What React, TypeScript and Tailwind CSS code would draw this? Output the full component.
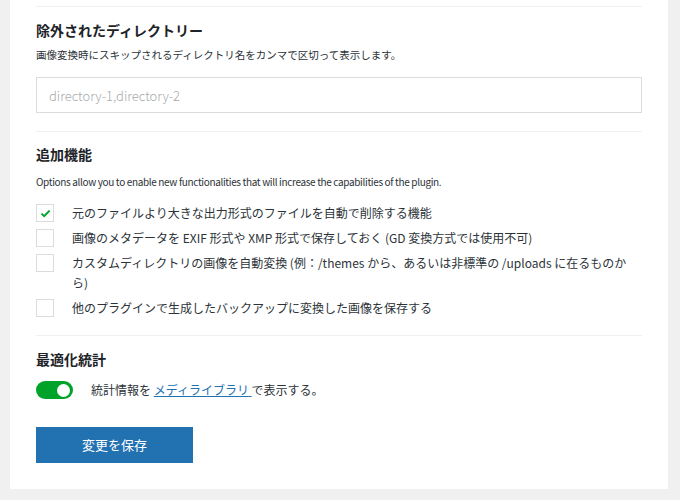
import React, { useState } from "react"

const options = [
  { label: "元のファイルより大きな出力形式のファイルを自動で削除する機能", checked: true },
  { label: "画像のメタデータを EXIF 形式や XMP 形式で保存しておく (GD 変換方式では使用不可)", checked: false },
  {
    label:
      "カスタムディレクトリの画像を自動変換 (例：/themes から、あるいは非標準の /uploads に在るものから)",
    checked: false,
  },
  { label: "他のプラグインで生成したバックアップに変換した画像を保存する", checked: false },
]

const Check: React.FC<{ checked: boolean; onClick: () => void }> = ({ checked, onClick }) => (
  <button
    type="button"
    onClick={onClick}
    className="mt-[1px] flex h-[18px] w-[18px] shrink-0 items-center justify-center border border-[#dcdcde] bg-white"
  >
    {checked && (
      <svg width="11" height="9" viewBox="0 0 11 9">
        <path d="M1.5 4.6 4.2 7.2 9.6 1.6" fill="none" stroke="#00a32a" strokeWidth="2" />
      </svg>
    )}
  </button>
)

const App: React.FC = () => {
  const [dirs, setDirs] = useState("")
  const [checks, setChecks] = useState(options.map(o => o.checked))
  const [stats, setStats] = useState(true)

  return (
    <div
      className="min-h-[500px] w-[680px] bg-[#f0f0f1] pl-[10px] text-[#1d2327]"
      style={{ fontFamily: '"Noto Sans CJK JP", "Noto Sans", sans-serif' }}
    >
      <div className="w-[658px] bg-white px-[26px] pt-[6px] pb-[26px]">
        <div className="h-px bg-[#f0f0f1]" />

        {/* excluded directories */}
        <h2 className="mt-[13px] text-[14px] leading-[20px] font-bold">除外されたディレクトリー</h2>
        <p className="mt-[7px] text-[10.5px] leading-[16px] text-[#2c3338]">
          画像変換時にスキップされるディレクトリ名をカンマで区切って表示します。
        </p>
        <input
          type="text"
          value={dirs}
          onChange={e => setDirs(e.target.value)}
          placeholder="directory-1,directory-2"
          className="mt-[14px] h-[36px] w-full border border-[#dcdcde] px-[12px] text-[13px] font-light text-[#2c3338] outline-none placeholder:text-[#a7aaad]"
        />
        <div className="mt-[18px] h-px bg-[#f0f0f1]" />

        {/* extra features */}
        <h2 className="mt-[12px] text-[14px] leading-[20px] font-bold">追加機能</h2>
        <p className="mt-[10px] text-[10px] leading-[16px] tracking-[-0.35px] text-[#2c3338]">
          Options allow you to enable new functionalities that will increase the capabilities of the plugin.
        </p>
        <div className="mt-[13px] flex flex-col gap-[5px]">
          {options.map((o, i) => (
            <label key={i} className="flex items-start gap-[18px]">
              <Check
                checked={checks[i]}
                onClick={() => setChecks(checks.map((c, j) => (j === i ? !c : c)))}
              />
              <span className="text-[12px] leading-[20px] text-[#2c3338]">{o.label}</span>
            </label>
          ))}
        </div>
        <div className="mt-[17px] h-px bg-[#f0f0f1]" />

        {/* stats */}
        <h2 className="mt-[13px] text-[14px] leading-[20px] font-bold">最適化統計</h2>
        <div className="mt-[12px] flex h-[18px] items-center gap-[18px]">
          <button
            type="button"
            onClick={() => setStats(!stats)}
            className={`flex h-[18px] w-[37px] items-center rounded-full px-[3px] ${
              stats ? "justify-end bg-[#00a32a]" : "justify-start bg-[#a7aaad]"
            }`}
          >
            <span className="h-[13px] w-[13px] rounded-full bg-white" />
          </button>
          <span className="text-[12px] text-[#2c3338]">
            統計情報を{" "}
            <a href="#" className="text-[#2271b1] underline">
              メディライブラリ{" "}
            </a>
            で表示する。
          </span>
        </div>

        <button
          type="button"
          className="mt-[28px] h-[36px] w-[157px] bg-[#2271b1] text-[13px] text-white"
        >
          変更を保存
        </button>
      </div>
    </div>
  )
}

export default App
